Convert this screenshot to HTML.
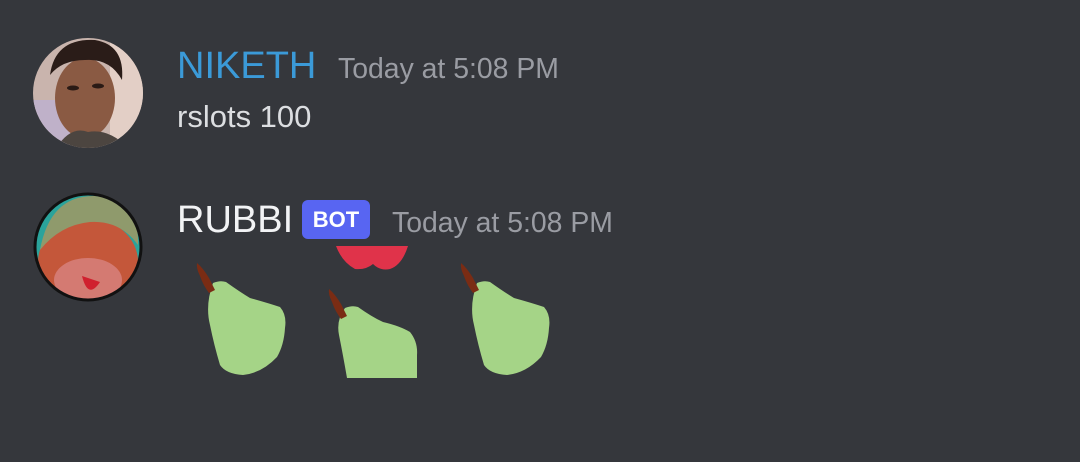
<!DOCTYPE html>
<html><head><meta charset="utf-8"><style>
html,body{margin:0;padding:0}
body{width:1080px;height:462px;background:#35373c;position:relative;overflow:hidden;font-family:"Liberation Sans","DejaVu Sans",sans-serif}
.t{position:absolute;line-height:1;white-space:nowrap}
</style></head><body>
<svg width="1080" height="462" style="position:absolute;left:0;top:0">
<defs>
<clipPath id="c1"><circle cx="88" cy="93" r="55"/></clipPath>
<clipPath id="c2"><circle cx="88" cy="247" r="54"/></clipPath>
</defs>
<g clip-path="url(#c1)">
<rect x="30" y="35" width="120" height="120" fill="#c9b4ad"/>
<rect x="110" y="35" width="40" height="120" fill="#e3cfc6"/>
<rect x="30" y="100" width="40" height="60" fill="#bfb1c9"/>
<ellipse cx="85" cy="98" rx="30" ry="40" fill="#8a5a43"/>
<path d="M50 75 Q55 38 95 40 Q125 45 122 80 Q110 58 85 60 Q62 60 50 75Z" fill="#2a1c18"/>
<path d="M55 150 Q70 125 88 132 Q110 128 130 150Z" fill="#4c4540"/>
<ellipse cx="73" cy="88" rx="6" ry="2.5" fill="#2a1a15"/>
<ellipse cx="98" cy="86" rx="6" ry="2.5" fill="#2a1a15"/>
</g>
<g clip-path="url(#c2)">
<rect x="30" y="190" width="120" height="120" fill="#2aa39b"/>
<ellipse cx="88" cy="262" rx="50" ry="44" fill="#c4573a"/>
<path d="M40 250 Q50 195 95 196 Q140 200 138 245 Q120 220 90 222 Q60 225 40 250Z" fill="#8f9a6c"/>
<ellipse cx="88" cy="280" rx="34" ry="22" fill="#d47a72"/>
<path d="M82 276 Q88 300 100 282 Z" fill="#d0202e"/>
</g>
<circle cx="88" cy="247" r="53" fill="none" stroke="#111" stroke-width="3"/>
<path d="M336 246 L408 246 Q402 265 390 269 Q380 271 373 264 Q366 270 355 269 Q342 262 336 246Z" fill="#e0334a"/>
<path d="M213 283 Q220 280 226 282 Q240 292 250 298 Q268 303 280 307 Q287 315 285 328 Q284 345 277 357 Q262 373 243 375 Q226 374 220 365 Q214 345 210 325 Q205 305 213 283Z" fill="#a5d487"/>
<path d="M197 263 Q203 268 209 278 Q213 286 215 290 L209 293 Q203 285 200 276 Q196 268 197 263Z" fill="#7a2c14"/>
<g transform="translate(264 0)">
<path d="M213 283 Q220 280 226 282 Q240 292 250 298 Q268 303 280 307 Q287 315 285 328 Q284 345 277 357 Q262 373 243 375 Q226 374 220 365 Q214 345 210 325 Q205 305 213 283Z" fill="#a5d487"/>
<path d="M197 263 Q203 268 209 278 Q213 286 215 290 L209 293 Q203 285 200 276 Q196 268 197 263Z" fill="#7a2c14"/>
</g>
<path d="M345 308 Q352 305 358 307 Q372 317 383 322 Q400 326 410 332 Q418 342 417 355 L417 378 L347 378 Q343 355 339 335 Q336 320 345 308Z" fill="#a5d487"/>
<path d="M329 289 Q335 294 341 304 Q345 312 347 316 L341 319 Q335 311 332 302 Q328 294 329 289Z" fill="#7a2c14"/>
</svg>
<div class="t" style="left:177px;top:47px;font-size:38px;color:#3b9ad8">NIKETH</div>
<div class="t" style="left:338px;top:55px;font-size:28.4px;color:#9a9ca3">Today at 5:08 PM</div>
<div class="t" style="left:177px;top:101px;font-size:31px;color:#dcdee1">rslots 100</div>
<div class="t" style="left:177px;top:201px;font-size:38px;color:#f2f3f5">RUBBI</div>
<div style="position:absolute;left:302px;top:200px;width:68px;height:39px;background:#5865f2;border-radius:6px;color:#fff;font-size:22px;font-weight:bold;line-height:39px;text-align:center">BOT</div>
<div class="t" style="left:392px;top:209px;font-size:28.4px;color:#9a9ca3">Today at 5:08 PM</div>
</body></html>
